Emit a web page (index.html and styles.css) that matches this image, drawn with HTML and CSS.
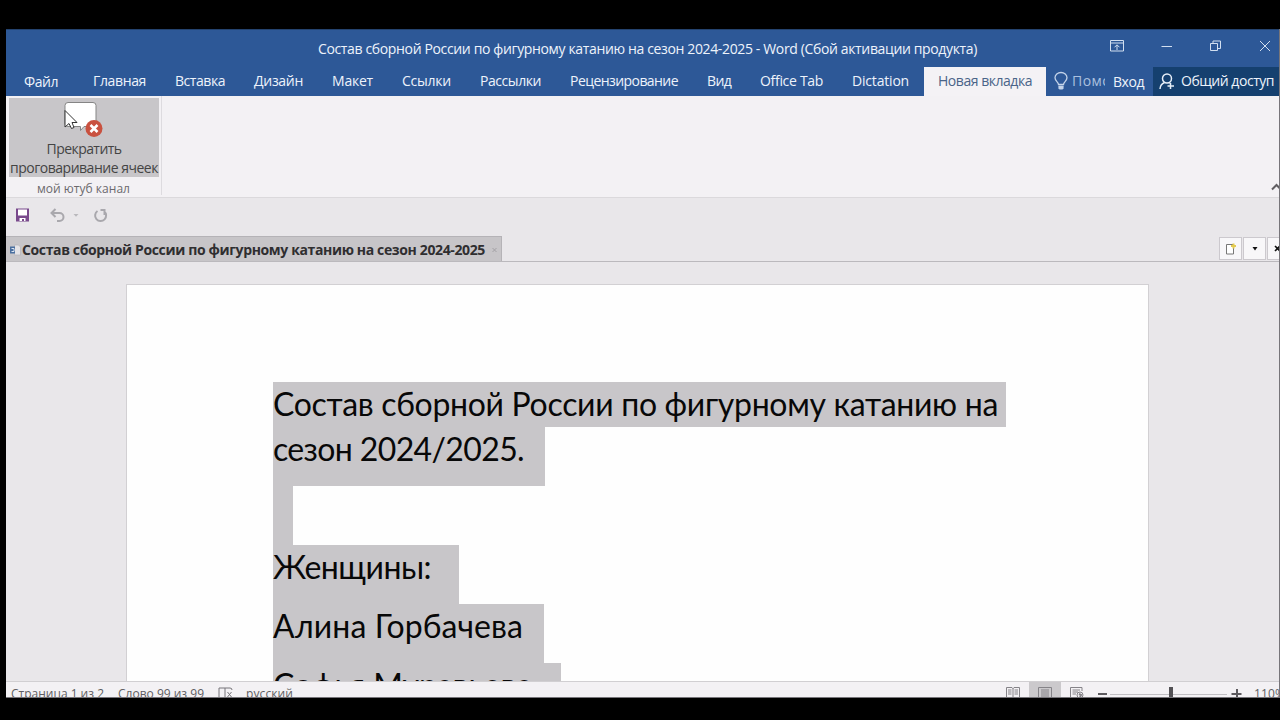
FILE: index.html
```html
<!DOCTYPE html>
<html lang="ru">
<head>
<meta charset="utf-8">
<title>Состав сборной России - Word</title>
<link rel="stylesheet" href="styles.css">
</head>
<body>
<div class="window">
  <header class="titlebar">
    <div class="title"><span data-w="659">Состав сборной России по фигурному катанию на сезон 2024-2025 - Word (Сбой активации продукта)</span></div>
    <div class="controls">
      <svg width="14" height="12" viewBox="0 0 14 12"><path d="M.5 .5h13v10.500h-13zM.5 3h13M7 10V5M4.500 7.300 7 4.800l2.500 2.500"/></svg>
      <svg width="12" height="12" viewBox="0 0 12 12"><path d="M.5 6.500h10.500"/></svg>
      <svg width="12" height="12" viewBox="0 0 12 12"><path d="M.5 3.500h7v7h-7zM3 3.500V1h7.500v7.500H7.500"/></svg>
      <svg width="12" height="12" viewBox="0 0 12 12"><path d="M1 1l10 10M11 1 1 11"/></svg>
    </div>
  </header>
  <nav class="tabs">
    <span class="tab file" data-w="34">Файл</span>
    <span class="tab" data-w="53">Главная</span>
    <span class="tab" data-w="50">Вставка</span>
    <span class="tab" data-w="49">Дизайн</span>
    <span class="tab" data-w="41">Макет</span>
    <span class="tab" data-w="49">Ссылки</span>
    <span class="tab" data-w="61">Рассылки</span>
    <span class="tab" data-w="108">Рецензирование</span>
    <span class="tab" data-w="24">Вид</span>
    <span class="tab" data-w="63">Office Tab</span>
    <span class="tab" data-w="57">Dictation</span>
    <span class="tab active"><span data-w="94">Новая вкладка</span></span>
    <div class="tell">
      <svg width="14" height="19" viewBox="0 0 14 19"><path d="M4.500 12.500C4.500 10 1 9 1 5.800a6 5.300 0 0 1 12 0C13 9 9.500 10 9.500 12.500zM4.500 14.500h5"/><path class="bulb-base" d="M4.500 14.500h5v2l-1 1h-3l-1-1z"/></svg>
      <span class="tell-text" data-w="52">Помощ</span>
    </div>
    <span class="signin" data-w="31">Вход</span>
    <div class="share">
      <svg width="16" height="17" viewBox="0 0 16 17"><circle cx="8" cy="5.500" r="4.500"/><path d="M1 16c.2-3.500 2-5.500 4.500-6.500M10 9.500l1.500 1M11.500 10v6M8.500 13h6.500"/></svg>
      <span data-w="93">Общий доступ</span>
    </div>
  </nav>
  <section class="ribbon">
    <div class="group">
      <div class="command">
        <svg class="command-icon" width="40" height="37" viewBox="0 0 40 37"><path d="M5 1.500h25q3 0 3 3v18q0 3-3 3h-9l-3.500 4v-4H5q-3 0-3-3v-18q0-3 3-3z" fill="#fff" stroke="#858585"/><circle cx="31" cy="27.500" r="8.500" fill="#c9513f"/><path d="M27.500 24l7 7M34.500 24l-7 7" stroke="#fff" stroke-width="2.600"/><path d="M2 9.500V26l4-3.500 2.500 5 2.500-1-2-5h5z" fill="#fff" stroke="#333"/></svg>
        <span class="line" data-w="75">Прекратить</span>
        <span class="line" data-w="148">проговаривание ячеек</span>
      </div>
      <div class="caption"><span data-w="93">мой ютуб канал</span></div>
    </div>
    <svg class="collapse" width="10" height="8" viewBox="0 0 10 8"><path d="M1 6.500 5.500 2 10 6.500"/></svg>
  </section>
  <div class="quick">
    <svg width="14" height="14" viewBox="0 0 14 14"><path d="M0 .5h13v13H0z" fill="#79498c"/><path d="M2 1.500h9v6H2zM3.500 10h6v3H8v-2H6v2H3.500z" fill="#fff"/></svg>
    <svg class="undo" width="28" height="15" viewBox="0 0 28 15"><path d="M1.500 5h8a4 4 0 0 1 0 8H7M5.500 1l-4 4 4 4" fill="none" stroke="#a9a8ad" stroke-width="2"/><path d="M23.500 6h5l-2.500 2.800z" fill="#b9b8bc"/></svg>
    <svg class="redo" width="15" height="15" viewBox="0 0 15 15"><path d="M4.500 3a5.500 5.500 0 1 0 6.500 .2M7.500 2H12.500M11.500 1.500V7" fill="none" stroke="#a9a8ad" stroke-width="2"/></svg>
  </div>
  <div class="docbar">
    <div class="doctab">
      <svg width="11" height="12" viewBox="0 0 11 12"><path d="M4.500 1h4l2 2v8h-6z" fill="#e4e3e6" stroke="#b5b3b7" stroke-width=".7"/><path d="M0 2.500h5v7H0z" fill="#4a6f9f"/><path d="M1.500 4.500H4v3H1.500" fill="none" stroke="#dbe4ef"/></svg>
      <b data-w="463">Состав сборной России по фигурному катанию на сезон 2024-2025</b>
      <svg class="doc-close" width="5" height="6" viewBox="0 0 5 6"><path d="M.5 1l4 4M4.500 1l-4 4" stroke="#a3a1a5"/></svg>
    </div>
    <div class="docbuttons">
      <div class="docbutton"><svg width="11" height="12" viewBox="0 0 11 12"><path d="M1.500 1.500h7v9.500h-7z" fill="#fff" stroke="#777"/><path d="M8.500 .5v5M6 3h5" stroke="#e4cb50" stroke-width="2"/></svg></div>
      <div class="docbutton"><svg width="6" height="4" viewBox="0 0 6 4"><path d="M.5 0h5L3 3.500z" fill="#111"/></svg></div>
      <div class="docbutton last"><svg width="4" height="7" viewBox="0 0 4 7"><path d="M0 1l5 5M5 1 0 6" stroke="#111" stroke-width="1.600"/></svg></div>
    </div>
  </div>
  <main class="canvas">
    <article class="page">
      <p class="row first"><span data-w="725">Состав сборной России по фигурному катанию на</span></p>
      <p class="row second"><span data-w="251">сезон 2024/2025.</span></p>
      <p class="row empty"></p>
      <p class="row women"><span data-w="158">Женщины:</span></p>
      <p class="row alina"><span data-w="250">Алина Горбачева</span></p>
      <p class="row sofia"><span data-w="259">Софья Муравьева</span></p>
    </article>
  </main>
  <footer class="status">
    <span class="pages" data-w="93">Страница 1 из 2</span>
    <span class="words" data-w="86">Слово 99 из 99</span>
    <svg class="proof" width="15" height="14" viewBox="0 0 15 14"><path d="M1 1h6v11H1zM7 1h5q2 0 2 2M7 12h5M9.500 5l4 5M13.500 5l-4 5"/></svg>
    <span data-w="47">русский</span>
    <div class="views">
      <div class="view"><svg width="14" height="13" viewBox="0 0 14 13"><path d="M.5 1.500H6l1 1 1-1h5.500v10H.5zM7 2v10M2 4h3.500M2 6h3.500M2 8h3.500M8.500 4H12M8.500 6H12M8.500 8H12"/></svg></div>
      <div class="view selected"><svg width="14" height="13" viewBox="0 0 14 13"><path d="M.5 1.500h13v12H.5zM3 4h8M3 6h8M3 8h8M3 10h8"/></svg></div>
      <div class="view"><svg width="14" height="13" viewBox="0 0 14 13"><path d="M6 12H.5V1.500H12V5M2.500 4H10M2.500 6H8M2.500 8H6"/><circle cx="10" cy="9" r="3"/><path d="M9 8l2 1-1 2" stroke-width="2"/></svg></div>
    </div>
    <svg class="zoom" width="140" height="14" viewBox="0 0 140 14"><path d="M0 8h9" stroke="#5c5a5e" stroke-width="2"/><path d="M12 8.500h117" stroke="#c0bec2"/><path d="M73 1v12" stroke="#535155" stroke-width="4"/><path d="M133.500 8h10M139 3v10" stroke="#5c5a5e" stroke-width="2"/></svg>
    <span class="percent" data-w="31">110%</span>
  </footer>
</div>
<script src="fit.js"></script>
</body>
</html>
```
FILE: styles.css
```css
* { box-sizing: border-box; }
body { margin: 0; width: 1280px; height: 720px; overflow: hidden; background: #000; padding: 29px 0 0 6px; font-family: "Open Sans", "Noto Sans", sans-serif; color: #444; }
svg { display: block; flex: none; overflow: visible; }
span, b { white-space: nowrap; }
.window { width: 1274px; height: 669px; display: flex; flex-direction: column; overflow: hidden; background: #e9e7ea; border-right: 1px solid #77757a; border-bottom: 1px solid #77757a; }
.titlebar { height: 38px; flex: none; background: #2d5897; border-top: 1px solid #24436f; display: flex; justify-content: space-between; color: #edf3fb; }
.title { padding: 9px 0 0 312px; font-size: 14px; line-height: 20px; }
.controls { display: flex; gap: 37px; padding: 10px 8px 0 0; }
.controls svg { fill: none; stroke: #d2dff0; }
.tabs { height: 29px; flex: none; background: #2d5897; display: flex; align-items: stretch; color: #edf3fb; font-size: 14px; line-height: 28px; padding-left: 18px; }
.tab { margin-right: 29px; flex: none; }
.file { margin-right: 35px; padding-top: 1px; }
.active { background: #f4f2f5; color: #4a6488; width: 122px; padding-left: 14px; margin: 0 0 0 -14px; }
.tell { width: 59px; display: flex; padding: 5px 0 0 8px; overflow: hidden; color: #aac0df; flex: none; line-height: 18px; }
.tell svg { fill: none; stroke: #c3d3e9; stroke-width: 1.300; margin-right: 4px; }
.tell .bulb-base { fill: #c3d3e9; stroke: none; }
.signin { margin-left: 8px; padding-top: 1px; flex: none; }
.share { margin-left: auto; width: 126px; background: #15406f; display: flex; padding-left: 6px; flex: none; }
.share svg { margin: 6px 6px 0 0; fill: none; stroke: #e6eef8; stroke-width: 1.500; }
.ribbon { height: 102px; flex: none; background: #f3f1f4; border-bottom: 1px solid #dbd9dc; display: flex; justify-content: space-between; }
.group { width: 156px; height: 99px; border-right: 1px solid #dddbdf; }
.command { margin: 2px 0 0 3px; width: 150px; height: 79px; background: #c8c6c9; display: flex; flex-direction: column; align-items: center; font-size: 14px; }
.command-icon { margin: 3px 0 1px -3px; }
.command .line { line-height: 19px; }
.caption { text-align: center; font-size: 12px; line-height: 23px; color: #6b696d; }
.collapse { margin: 87px -2px 0 0; fill: none; stroke: #605e62; stroke-width: 2; }
.quick { height: 38px; flex: none; display: flex; padding: 10px 0 0 10px; }
.undo { margin: 0 0 0 20px; }
.redo { margin-left: 15px; }
.docbar { height: 26px; flex: none; border-bottom: 1px solid #bbb9bd; display: flex; justify-content: space-between; }
.doctab { width: 496px; background: #c7c5c8; border: 1px solid #b5b3b7; border-left: 0; border-bottom: 0; display: flex; align-items: center; padding: 1px 0 0 4px; font-size: 14px; color: #2f2e30; }
.doctab b { margin-left: 1px; }
.doc-close { margin-left: 7px; }
.docbuttons { display: flex; gap: 1px; padding-top: 1px; }
.docbutton { width: 23px; height: 23px; background: #f8f7f9; border: 1px solid #ccc9ce; display: flex; align-items: center; justify-content: center; }
.docbutton.last { width: 12px; border-right: 0; justify-content: flex-end; }
.canvas { height: 419px; flex: none; padding: 22px 0 0 120px; overflow: hidden; }
.page { width: 1023px; height: 500px; background: #fefefe; border: 1px solid #d2d0d3; padding: 97px 0 0 146px; color: #080808; font-family: Lato, "Open Sans", sans-serif; font-size: 32px; }
.row { margin: 0; background: #c8c6c9; height: 59px; line-height: 44px; }
.first { width: 733px; height: 45px; }
.second { width: 272px; }
.empty { width: 20px; }
.women { width: 186px; }
.alina { width: 271px; }
.sofia { width: 288px; }
.status { height: 17px; flex: none; background: #f3f1f4; border-top: 1px solid #d1cfd2; display: flex; overflow: hidden; padding-left: 5px; font-size: 12px; line-height: 24px; color: #605e62; }
.words { margin-left: 14px; }
.proof { margin: 5px 13px 0 14px; fill: none; stroke: #77757a; }
.views { margin-left: auto; display: flex; flex: none; }
.view { width: 32px; padding: 4px 0 0 9px; }
.view svg { fill: none; stroke: #858388; }
.selected { background: #cbc9cc; }
.zoom { margin: 4px 16px 0 5px; }
.percent { width: 25px; flex: none; }
```
FILE: fit.js
```js
// Spreads each label's letters over the width set in data-w.
document.querySelectorAll('[data-w]').forEach(function (el) {
  var range = document.createRange();
  range.selectNodeContents(el);
  var natural = range.getBoundingClientRect().width;
  el.style.letterSpacing = (el.dataset.w - natural) / el.textContent.length + 'px';
});
```
